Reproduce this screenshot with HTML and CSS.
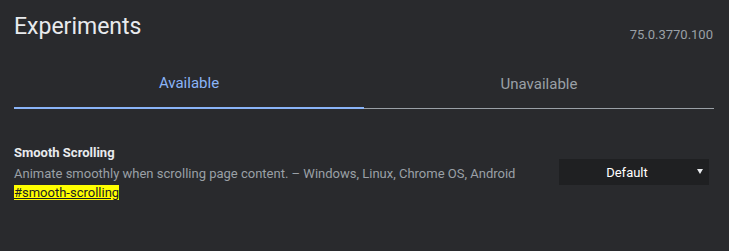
FILE: index.html
```html
<!DOCTYPE html>
<html>
<head>
<meta charset="utf-8">
<link rel="stylesheet" href="styles.css">
</head>
<body>
<div class="page">
  <header class="header">
    <h1 class="title">Experiments</h1>
    <span class="version">75.0.3770.100</span>
  </header>
  <nav class="tabs">
    <div class="tab active">Available</div>
    <div class="tab">Unavailable</div>
  </nav>
  <section class="experiment">
    <div class="info">
      <div class="name">Smooth Scrolling</div>
      <div class="desc">Animate smoothly when scrolling page content. – Windows, Linux, Chrome OS, Android</div>
      <a class="permalink" href="#smooth-scrolling">#smooth-scrolling</a>
    </div>
    <div class="select">
      <span class="select-label">Default</span>
      <span class="arrow"></span>
    </div>
  </section>
</div>
</body>
</html>
```
FILE: styles.css
```css
html, body {
  margin: 0;
  padding: 0;
  background: #292a2d;
  height: 100%;
}
body {
  font-family: Roboto, "Liberation Sans", sans-serif;
  color: #e8eaed;
}
.page {
  padding: 0 15px 0 14px;
}
.header {
  display: flex;
  justify-content: space-between;
  align-items: flex-end;
  height: 42px;
}
.title {
  margin: 0;
  font-size: 23px;
  font-weight: 400;
  line-height: 26px;
  padding-bottom: 2px;
  color: #e8eaed;
}
.version {
  font-size: 13px;
  color: #9aa0a6;
  padding-bottom: 0;
  margin-right: 1px;
}
.tabs {
  display: flex;
  margin-top: 23px;
  border-bottom: 1px solid #9aa0a6;
}
.tab {
  flex: 1;
  text-align: center;
  font-size: 15px;
  color: #9aa0a6;
  height: 43px;
  line-height: 39px;
  box-sizing: border-box;
}
.tab.active {
  color: #8ab4f8;
  border-bottom: 2px solid #8ab4f8;
  margin-bottom: -1px;
  line-height: 37px;
  height: 44px;
}
.experiment {
  display: flex;
  justify-content: space-between;
  align-items: center;
  margin-top: 36px;
}
.name {
  font-size: 13px;
  font-weight: 700;
  color: #e8eaed;
  line-height: 16px;
}
.desc {
  font-size: 13px;
  color: #9aa0a6;
  line-height: 16px;
  margin-top: 5px;
}
.permalink {
  display: inline-block;
  font-size: 13px;
  line-height: 15px;
  color: #202124;
  background: #ffff00;
  text-decoration: underline;
  margin-top: 1px;
}
.select {
  width: 150px;
  height: 26px;
  box-sizing: border-box;
  padding-right: 14px;
  background: #1f2022;
  display: flex;
  align-items: center;
  justify-content: center;
  position: relative;
  margin-top: -2px;
  margin-right: 5px;
}
.select-label {
  font-size: 13px;
  color: #ffffff;
  font-weight: 400;
}
.arrow {
  position: absolute;
  right: 6px;
  top: 10px;
  width: 0;
  height: 0;
  border-left: 3px solid transparent;
  border-right: 3px solid transparent;
  border-top: 5px solid #e8eaed;
}
```
